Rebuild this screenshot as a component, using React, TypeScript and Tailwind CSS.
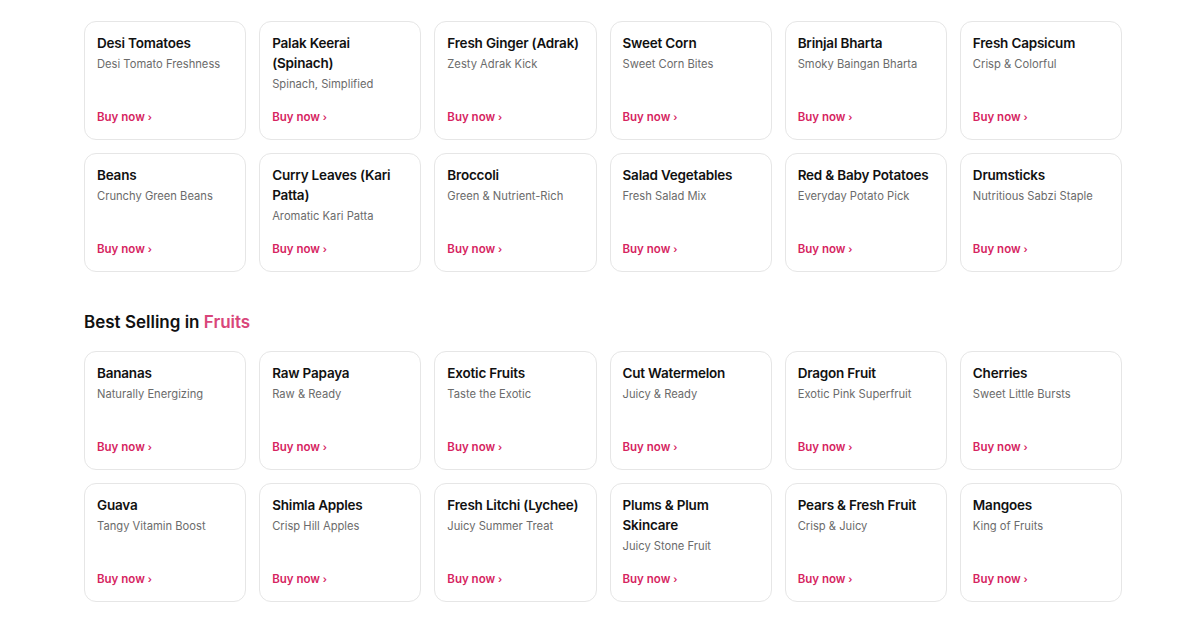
const vegetables = [
  { title: 'Desi Tomatoes', sub: 'Desi Tomato Freshness' },
  { title: 'Palak Keerai (Spinach)', sub: 'Spinach, Simplified' },
  { title: 'Fresh Ginger (Adrak)', sub: 'Zesty Adrak Kick' },
  { title: 'Sweet Corn', sub: 'Sweet Corn Bites' },
  { title: 'Brinjal Bharta', sub: 'Smoky Baingan Bharta' },
  { title: 'Fresh Capsicum', sub: 'Crisp & Colorful' },
  { title: 'Beans', sub: 'Crunchy Green Beans' },
  { title: 'Curry Leaves (Kari Patta)', sub: 'Aromatic Kari Patta' },
  { title: 'Broccoli', sub: 'Green & Nutrient-Rich' },
  { title: 'Salad Vegetables', sub: 'Fresh Salad Mix' },
  { title: 'Red & Baby Potatoes', sub: 'Everyday Potato Pick' },
  { title: 'Drumsticks', sub: 'Nutritious Sabzi Staple' },
];

const fruits = [
  { title: 'Bananas', sub: 'Naturally Energizing' },
  { title: 'Raw Papaya', sub: 'Raw & Ready' },
  { title: 'Exotic Fruits', sub: 'Taste the Exotic' },
  { title: 'Cut Watermelon', sub: 'Juicy & Ready' },
  { title: 'Dragon Fruit', sub: 'Exotic Pink Superfruit' },
  { title: 'Cherries', sub: 'Sweet Little Bursts' },
  { title: 'Guava', sub: 'Tangy Vitamin Boost' },
  { title: 'Shimla Apples', sub: 'Crisp Hill Apples' },
  { title: 'Fresh Litchi (Lychee)', sub: 'Juicy Summer Treat' },
  { title: 'Plums & Plum Skincare', sub: 'Juicy Stone Fruit' },
  { title: 'Pears & Fresh Fruit', sub: 'Crisp & Juicy' },
  { title: 'Mangoes', sub: 'King of Fruits' },
];

function Card({ title, sub }: { title: string; sub: string }) {
  return (
    <div className="h-[119px] rounded-xl border border-[#e6e6e6] bg-white pl-3 pr-2 pt-[11px] pb-[14px] flex flex-col">
      <h3 className="text-[13.5px] leading-5 tracking-[-0.2px] font-semibold text-[#111111]">{title}</h3>
      <p className="mt-px text-[11.2px] leading-5 text-[#6b6b6b]">{sub}</p>
      <a className="mt-auto text-[11.5px] leading-4 font-semibold text-[#d6245f]">
        Buy now <span className="text-[10px]">›</span>
      </a>
    </div>
  );
}

export default function App() {
  return (
    <div
      className="min-h-screen bg-white"
      style={{ fontFamily: 'Inter, "Noto Sans", sans-serif' }}
    >
      <div className="ml-[84px] w-[1038px] pt-[21px]">
        <div className="grid grid-cols-6 gap-[13px]">
          {vegetables.map((v) => (
            <Card key={v.title} {...v} />
          ))}
        </div>

        <h2 className="mt-[38px] mb-[17px] text-[17px] leading-6 font-semibold text-[#111111]">
          Best Selling in <span className="text-[#d9467a]">Fruits</span>
        </h2>

        <div className="grid grid-cols-6 gap-[13px]">
          {fruits.map((f) => (
            <Card key={f.title} {...f} />
          ))}
        </div>
      </div>
    </div>
  );
}
